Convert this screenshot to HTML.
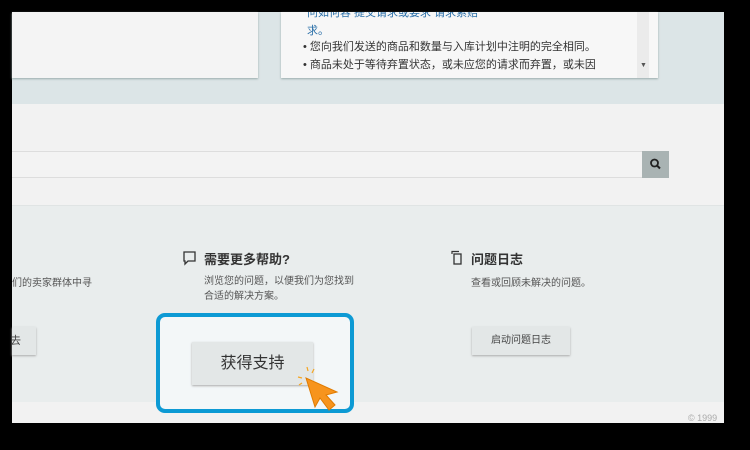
<!DOCTYPE html>
<html><head><meta charset="utf-8"><style>
*{margin:0;padding:0;box-sizing:border-box}
body{width:750px;height:450px;background:#000;position:relative;overflow:hidden;font-family:"Liberation Sans","Noto Sans CJK SC",sans-serif;color:#333}
.a{position:absolute}
</style></head><body>
<div class="a" style="left:12px;top:12px;width:712px;height:92px;background:#dce5e7"></div>
<div class="a" style="left:12px;top:12px;width:246px;height:66px;background:#f4f4f4;box-shadow:0 1px 2px #9aa"></div>
<div class="a" style="left:281px;top:12px;width:377px;height:66px;background:#f7f7f7;box-shadow:0 1px 2px #9aa;overflow:hidden">
 <div class="a" style="left:26px;top:-8px;font-size:11px;color:#2a6fa8;line-height:18px;width:330px">问如何容 提交请求或要求 请求索赔<br>求。</div>
 <div class="a" style="left:22px;top:26px;font-size:11px;line-height:18px;color:#333">• 您向我们发送的商品和数量与入库计划中注明的完全相同。<br>• 商品未处于等待弃置状态，或未应您的请求而弃置，或未因</div>
 <div class="a" style="left:356px;top:0;width:12px;height:66px;background:#ebebeb"></div>
 <div class="a" style="left:359px;top:50px;font-size:7px;color:#555">▼</div>
</div>
<div class="a" style="left:12px;top:104px;width:712px;height:102px;background:#f2f2f2"></div>
<div class="a" style="left:12px;top:151px;width:630px;height:27px;background:#f3f3f3;border-top:1px solid #ddd;border-bottom:1px solid #ddd"></div>
<div class="a" style="left:642px;top:151px;width:27px;height:27px;background:#a9b3b3">
<svg width="27" height="27"><circle cx="12.5" cy="12" r="3.5" fill="none" stroke="#222" stroke-width="1.8"/><line x1="15" y1="14.5" x2="18" y2="17.5" stroke="#222" stroke-width="2"/></svg></div>
<div class="a" style="left:12px;top:205px;width:712px;height:197px;background:#e9eded;border-top:1px solid #e0e4e4"></div>
<div class="a" style="left:12px;top:402px;width:712px;height:21px;background:#f2f2f2"></div>
<div class="a" style="left:688px;top:413px;font-size:9px;color:#aaa">© 1999</div>
<div class="a" style="left:12px;top:274px;font-size:10px;color:#555">们的卖家群体中寻</div>
<div class="a" style="left:12px;top:327px;width:24px;height:28px;background:#e3e7e7;box-shadow:0 1px 2px #aaa;font-size:11px;line-height:28px;color:#444;overflow:hidden;text-indent:-2px">去</div>
<svg class="a" style="left:182px;top:250px" width="16" height="16"><path d="M2 2h11v9H6l-3 3v-3H2z" fill="none" stroke="#333" stroke-width="1.3"/></svg>
<div class="a" style="left:204px;top:249px;font-size:13px;font-weight:bold;color:#333">需要更多帮助?</div>
<div class="a" style="left:204px;top:274px;font-size:10px;line-height:15px;color:#555">浏览您的问题，以便我们为您找到<br>合适的解决方案。</div>
<svg class="a" style="left:449px;top:250px" width="16" height="16"><path d="M3 4V1.5h7" fill="none" stroke="#333" stroke-width="1.2"/><rect x="5" y="4" width="7" height="10" fill="none" stroke="#333" stroke-width="1.3"/></svg>
<div class="a" style="left:471px;top:249px;font-size:13px;font-weight:bold;color:#333">问题日志</div>
<div class="a" style="left:471px;top:274px;font-size:10px;color:#555">查看或回顾未解决的问题。</div>
<div class="a" style="left:472px;top:327px;width:98px;height:28px;background:#e3e7e7;box-shadow:0 1px 2px #aaa;font-size:10px;line-height:28px;text-align:center;color:#444">启动问题日志</div>
<div class="a" style="left:156px;top:313px;width:198px;height:100px;border:4px solid #0d9ad4;border-radius:9px;background:#f3f7f8"></div>
<div class="a" style="left:192px;top:342px;width:121px;height:43px;background:#e3e7e7;box-shadow:0 1px 2px #aaa;font-size:16px;line-height:43px;text-align:center;color:#333">获得支持</div>
<svg class="a" style="left:294px;top:366px" width="50" height="50">
<g stroke="#f5a623" stroke-width="1.2"><line x1="13" y1="1" x2="14" y2="5"/><line x1="20" y1="3" x2="18" y2="7"/><line x1="4" y1="11" x2="8" y2="12"/><line x1="5" y1="19" x2="8" y2="17"/></g>
<path d="M12 12 L21 41 L26 32 L35 44 L41 39 L32 29 L43 26 Z" fill="#f7941d" stroke="#e07b00" stroke-width="1"/>
</svg>
</body></html>
